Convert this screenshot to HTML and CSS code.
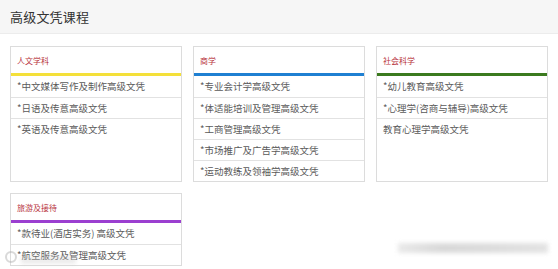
FILE: index.html
```html
<!DOCTYPE html>
<html lang="zh-CN">
<head>
  <meta charset="UTF-8" />
  <meta name="viewport" content="width=device-width, initial-scale=1.0" />
  <title>高级文凭课程</title>
  <link rel="stylesheet" href="styles.css">
</head>
<body>
  <div class="page-head">
    <h2>高级文凭课程</h2>
  </div>

  <div class="courses">
    <div class="card">
      <div class="card-title">人文学科</div>
      <div class="bar yellow"></div>
      <ul>
        <li>*中文媒体写作及制作高级文凭</li>
        <li>*日语及传意高级文凭</li>
        <li>*英语及传意高级文凭</li>
      </ul>
    </div>

    <div class="card">
      <div class="card-title">商学</div>
      <div class="bar blue"></div>
      <ul>
        <li>*专业会计学高级文凭</li>
        <li>*体适能培训及管理高级文凭</li>
        <li>*工商管理高级文凭</li>
        <li>*市场推广及广告学高级文凭</li>
        <li>*运动教练及领袖学高级文凭</li>
      </ul>
    </div>

    <div class="card">
      <div class="card-title">社会科学</div>
      <div class="bar green"></div>
      <ul>
        <li>*幼儿教育高级文凭</li>
        <li>*心理学(咨商与辅导)高级文凭</li>
        <li>教育心理学高级文凭</li>
      </ul>
    </div>

    <div class="card">
      <div class="card-title">旅游及接待</div>
      <div class="bar purple"></div>
      <ul>
        <li>*款待业(酒店实务) 高级文凭</li>
        <li>*航空服务及管理高级文凭</li>
      </ul>
    </div>
  </div>

  <!-- watermarks -->
  <div class="mark-left"><span class="mark-ring"></span><span class="mark-smudge"></span></div>
  <div class="mark-right"></div>
</body>
</html>
```

FILE: styles.css
```css
* {
  margin: 0;
  padding: 0;
  box-sizing: border-box;
  font-family: "Noto Sans CJK SC", "Noto Sans", sans-serif;
}
body {
  background: #fff;
  width: 558px;
  height: 269px;
  overflow: hidden;
  position: relative;
}
.page-head {
  height: 34px;
  background: #f6f6f6;
  border-bottom: 1px solid #ececec;
  padding-left: 10px;
  display: flex;
  align-items: center;
}
.page-head h2 {
  font-size: 13px;
  font-weight: normal;
  color: #333;
  letter-spacing: 0.2px;
}
.courses {
  display: flex;
  flex-wrap: wrap;
  gap: 11px;
  padding: 12px 10px 0;
}
.card {
  width: 172px;
  border: 1px solid #dcdcdc;
  background: #fff;
}
.card-title {
  height: 26px;
  padding: 8px 0 0 6px;
  font-size: 8px;
  line-height: 12px;
  color: #b8333d;
}
.bar {
  height: 3px;
}
.yellow { background: #f4e03a; }
.blue { background: #1f80d2; }
.green { background: #3b7a1f; }
.purple { background: #9b3fd0; }
.card ul {
  list-style: none;
}
.card li {
  height: 21px;
  line-height: 21px;
  padding-left: 6px;
  font-size: 9.5px;
  color: #5a5a5a;
  border-top: 1px solid #e2e2e2;
  white-space: nowrap;
}
.card li:first-child {
  border-top: none;
}
.mark-left {
  position: absolute;
  left: 5px;
  top: 250px;
  display: flex;
  align-items: center;
  gap: 4px;
}
.mark-ring {
  width: 12px;
  height: 12px;
  border: 2px solid rgba(170, 170, 170, 0.45);
  border-radius: 50%;
}
.mark-smudge {
  width: 55px;
  height: 8px;
  margin-top: 6px;
  background: rgba(200, 200, 200, 0.35);
  filter: blur(2px);
}
.mark-right {
  position: absolute;
  left: 398px;
  top: 243px;
  width: 150px;
  height: 10px;
  background: linear-gradient(90deg, #e4e4e4, #cfcfcf 30%, #d4d4d4 60%, #dcdcdc);
  filter: blur(2px);
  opacity: 0.8;
}
```
